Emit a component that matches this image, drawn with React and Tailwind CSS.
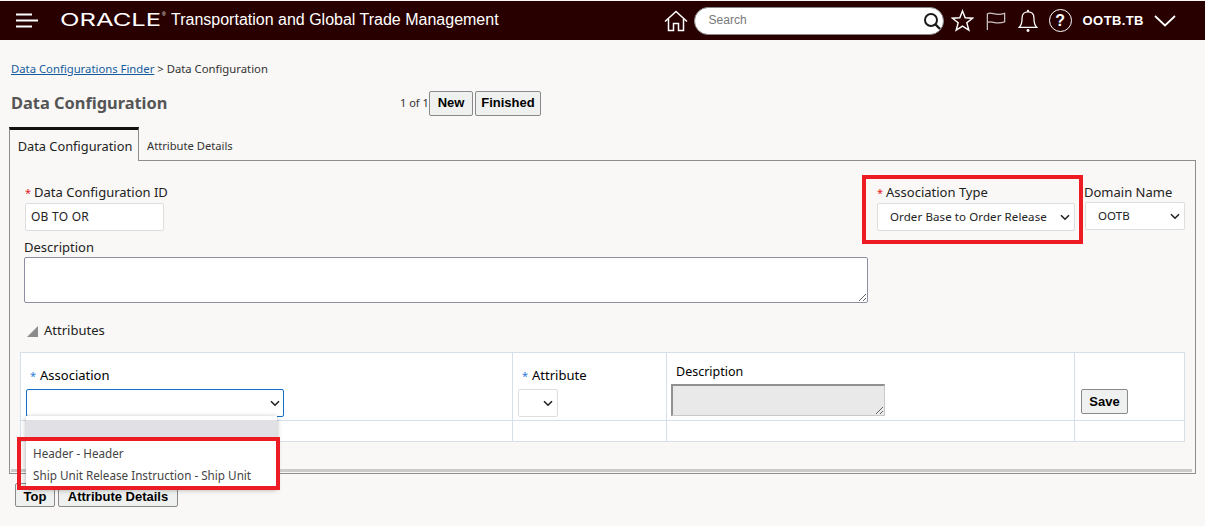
const sans = "font-['Noto_Sans','Open_Sans',sans-serif]";

function Chevron({ className = "" }) {
  return (
    <svg width="10" height="7" viewBox="0 0 10 7" className={className}>
      <path d="M1 1.2 L5 5.2 L9 1.2" fill="none" stroke="#222" strokeWidth="1.6" />
    </svg>
  );
}

function Select({ className = "", text, textClass = "" }) {
  return (
    <div className={`flex items-center justify-between bg-white border border-[#dedede] rounded-[2px] h-[28px] ${className}`}>
      <span className={`text-[11.5px] tracking-[0.1px] text-[#222] ${textClass}`}>{text}</span>
      <Chevron className="mr-[4px]" />
    </div>
  );
}

function Btn({ children, className = "" }) {
  return (
    <button className={`font-['Liberation_Sans',sans-serif] font-bold text-[13px] text-black bg-[#eff0f0] border border-[#8a8a8a] rounded-[2px] flex items-center justify-center ${className}`}>
      {children}
    </button>
  );
}

function Header() {
  return (
    <header className="mt-[1px] h-[39px] bg-[#290000] flex items-center text-white font-['Liberation_Sans',sans-serif]">
      <svg width="22" height="16" viewBox="0 0 22 16" className="ml-[16px] shrink-0">
        <path d="M0 1.5H16M0 7.5H22M0 13.5H16" stroke="#fff" strokeWidth="2" />
      </svg>
      <span className="ml-[22px] w-[102px] shrink-0 font-['Inter',sans-serif] text-[17px] leading-none origin-left scale-x-[1.5] whitespace-nowrap">ORACLE</span>
      <span className="w-[9px] shrink-0 self-start mt-[11px] text-[5px] leading-none">®</span>
      <span className="shrink-0 pb-[2px] text-[16px] whitespace-nowrap">Transportation and Global Trade Management</span>
      <svg width="24" height="22" viewBox="0 0 24 22" className="ml-[165px] shrink-0">
        <path d="M1 11.5 L12 1.5 L23 11.5 M4.5 9 V20.5 H9.5 V13.5 H14.5 V20.5 H19.5 V9" fill="none" stroke="#fff" strokeWidth="1.5" />
      </svg>
      <div className="ml-[6px] shrink-0 w-[250px] h-[28px] bg-white rounded-[14px] border border-[#888] flex items-center justify-between pl-[14px] pr-[1px]">
        <span className="pb-[1px] text-[12px] text-[#777]">Search</span>
        <svg width="20" height="20" viewBox="0 0 20 20">
          <circle cx="9" cy="9" r="6" fill="none" stroke="#1a1a1a" strokeWidth="2" />
          <path d="M13.5 13.5 L18 18" stroke="#1a1a1a" strokeWidth="2.4" />
        </svg>
      </div>
      <svg width="23" height="23" viewBox="0 0 24 24" className="ml-[7px] shrink-0">
        <path d="M12 2 L14.8 9.2 L22.5 9.6 L16.5 14.4 L18.6 22 L12 17.8 L5.4 22 L7.5 14.4 L1.5 9.6 L9.2 9.2 Z" fill="none" stroke="#fff" strokeWidth="1.5" />
      </svg>
      <svg width="20" height="20" viewBox="0 0 22 22" className="ml-[12px] shrink-0">
        <path d="M1.5 21 V3 C7 0.5 10 6 20.5 2.5 V12 C10 15.5 7 10 1.5 12.5" fill="none" stroke="#c8c0c0" strokeWidth="1.4" />
      </svg>
      <svg width="20" height="25" viewBox="0 0 22 26" className="ml-[12px] shrink-0">
        <path d="M1.5 20.5 C4 18 4.5 15 4.5 10 C4.5 6 7 3.5 11 3.5 C15 3.5 17.5 6 17.5 10 C17.5 15 18 18 20.5 20.5 Z" fill="none" stroke="#fff" strokeWidth="1.4" />
        <circle cx="11" cy="2.5" r="1.2" fill="#fff" />
        <circle cx="11" cy="24" r="1.6" fill="#fff" />
      </svg>
      <div className="ml-[11px] shrink-0 w-[23px] h-[23px] rounded-full border-[1.5px] border-white flex items-center justify-center text-[16px] font-bold leading-none">?</div>
      <span className="ml-[11px] shrink-0 text-[13px] font-bold tracking-[0.4px]">OOTB.TB</span>
      <svg width="22" height="12" viewBox="0 0 22 12" className="ml-[10px] shrink-0">
        <path d="M1 1 L11 10.5 L21 1" fill="none" stroke="#fff" strokeWidth="1.8" />
      </svg>
    </header>
  );
}

function Req({ color = "text-[#e02020]", gap = "mr-[3px]" }) {
  return <span className={`${color} ${gap} text-[11px]`}>*</span>;
}

export default function App() {
  return (
    <div className={`relative w-[1205px] h-[526px] overflow-hidden bg-[#f9f8f6] ${sans} text-[12.5px] text-[#222]`}>
      <Header />
      <div className="ml-[11px] mt-[21px] text-[11.3px] leading-[16px] text-[#333]">
        <a className="text-[#145c9e] underline">Data Configurations Finder</a> &gt; Data Configuration
      </div>
      <div className="flex items-center ml-[11px] mt-[14px] h-[24px]">
        <h1 className="w-[389px] text-[16.4px] font-bold text-[#555]">Data Configuration</h1>
        <span className="w-[29px] text-[11px] text-[#333] whitespace-nowrap">1 of 1</span>
        <Btn className="w-[44px] h-[25px]">New</Btn>
        <Btn className="w-[66px] h-[25px] ml-[2px] text-[12.5px]">Finished</Btn>
      </div>
      <div className="flex ml-[9px] mr-[9px] mt-[12px] h-[34px]">
        <div className="w-[130px] pt-[3px] pl-[2px] border-t-[3px] border-t-[#111] border-r border-r-[#8e8e8e] border-l border-l-[#8e8e8e] flex items-center justify-center text-[12.8px] text-[#222]">Data Configuration</div>
        <div className="flex-1 border-b border-[#8e8e8e] pl-[8px] pt-[6px] flex items-center text-[11.2px] text-[#333]">Attribute Details</div>
      </div>
      <section className="relative ml-[9px] w-[1187px] h-[313px] border-x border-b border-[#8e8e8e]">
        <div className="flex justify-between pl-[15px] pr-[10px] pt-[22px]">
          <div>
            <div className="text-[13px] leading-[18px]"><Req />Data Configuration ID</div>
            <div className="mt-[1px] w-[139px] h-[28px] bg-white border border-[#dedede] rounded-[2px] flex items-center pl-[5px] text-[12px] tracking-[0.25px]">OB TO OR</div>
          </div>
          <div className="flex gap-[10px]">
            <div className="w-[198px]">
              <div className="text-[13px] leading-[18px]"><Req />Association Type</div>
              <Select className="mt-[1px] pl-[12px]" text="Order Base to Order Release" />
            </div>
            <div className="w-[100px]">
              <div className="text-[13px] leading-[18px] -ml-[1px]">Domain Name</div>
              <Select className="mt-[1px] pl-[12px]" text="OOTB" />
            </div>
          </div>
        </div>
        <div className="pl-[14px] mt-[7px] text-[13px] leading-[18px]">Description</div>
        <textarea readOnly className="block ml-[14px] mt-[1px] w-[844px] h-[46px] bg-white border border-[#8f8fa3] rounded-[2px]" />
        <div className="flex items-center ml-[16px] mt-[19px] h-[18px] text-[13px]">
          <svg width="13" height="13" viewBox="0 0 13 13"><path d="M12 1 V12 H1 Z" fill="#8c8c8c" /></svg>
          <span className="ml-[5px]">Attributes</span>
        </div>
        <div className="ml-[10px] mt-[12px] w-[1165px] bg-white border border-[#d6e0ea] grid grid-cols-[492px_154px_408px_1fr] grid-rows-[68px_20px]">
          <div className="border-r border-b border-[#d6e0ea] pl-[5px]">
            <div className="mt-[13px] text-[13px] leading-[18px] text-black ml-[4px]"><Req color="text-[#2a7de1]" gap="mr-[4px]" />Association</div>
            <div className="mt-[4px] w-[258px] h-[28px] border border-[#1670c4] rounded-[2px] bg-white flex items-center justify-end">
              <Chevron className="mr-[3px]" />
            </div>
          </div>
          <div className="border-r border-b border-[#d6e0ea] pl-[5px]">
            <div className="mt-[13px] text-[13px] leading-[18px] text-black ml-[4px]"><Req color="text-[#2a7de1]" gap="mr-[4px]" />Attribute</div>
            <Select className="mt-[4px] w-[40px]" text="" />
          </div>
          <div className="border-r border-b border-[#d6e0ea] pl-[4px]">
            <div className="mt-[10px] ml-[5px] text-[12.5px] leading-[18px] text-black">Description</div>
            <textarea readOnly className="block mt-[3px] w-[214px] h-[32px] bg-[#e9e9e9] border border-[#c8c8c8] border-t-2 border-l-2 border-t-[#909090] border-l-[#909090]" />
          </div>
          <div className="border-b border-[#d6e0ea] pl-[6px]">
            <Btn className="mt-[36px] w-[47px] h-[25px]">Save</Btn>
          </div>
          <div className="border-r border-[#d6e0ea]" />
          <div className="border-r border-[#d6e0ea]" />
          <div className="border-r border-[#d6e0ea]" />
          <div />
        </div>
        <div className="absolute left-[1px] right-[3px] bottom-[1px] h-[3px] bg-[#cccccc]" />
      </section>
      <div className="flex gap-[3px] ml-[15px] mt-[9px]">
        <Btn className="w-[40px] h-[24px] pt-[3px]">Top</Btn>
        <Btn className="w-[120px] h-[24px] pt-[3px]">Attribute Details</Btn>
      </div>
      <div className="absolute left-[26px] top-[416px] w-[251px] h-[73px] bg-white shadow-[0_1px_5px_rgba(0,0,0,0.3)] text-[11.7px] text-[#444] pt-[4px]">
        <div className="h-[17px] bg-[#e0e0e5]" />
        <div className="mt-[6px] pl-[7px] h-[22px] flex items-center">Header - Header</div>
        <div className="pl-[7px] h-[22px] flex items-center">Ship Unit Release Instruction - Ship Unit</div>
      </div>
      <div className="absolute left-[862px] top-[175px] w-[221px] h-[69px] border-4 border-[#ed1c24]" />
      <div className="absolute left-[17px] top-[437px] w-[263px] h-[53px] border-4 border-[#ed1c24]" />
    </div>
  );
}
